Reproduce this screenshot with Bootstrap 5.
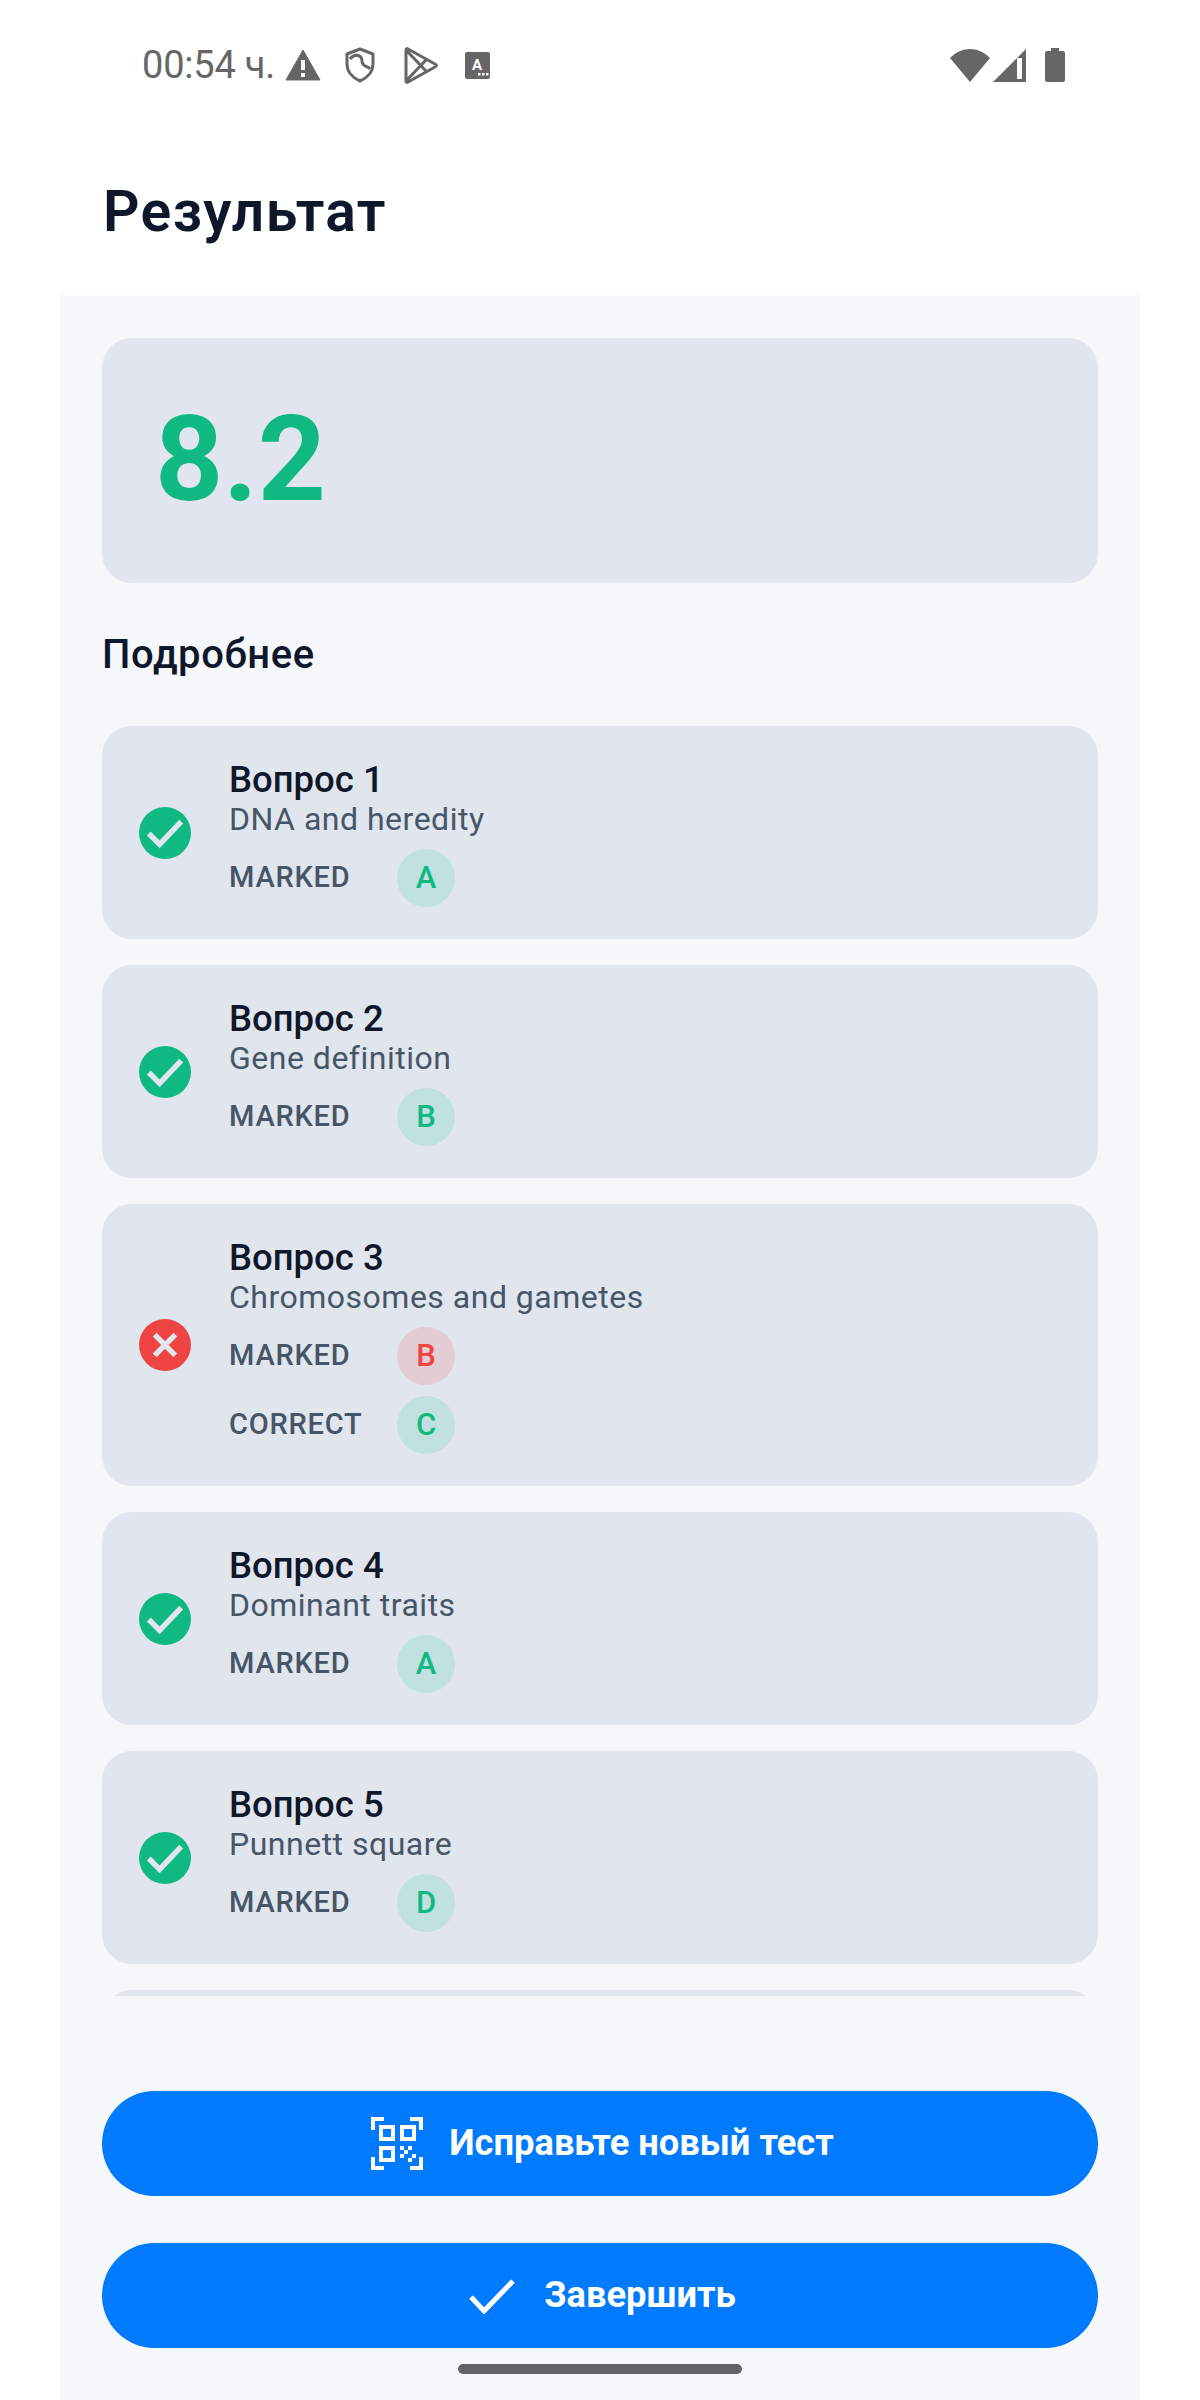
<!DOCTYPE html>
<html lang="ru">
<head>
    <meta charset="UTF-8">
    <meta name="viewport" content="width=device-width, initial-scale=1.0">
    <title>Результат</title>
    <link href="https://cdn.jsdelivr.net/npm/bootstrap@5.3.3/dist/css/bootstrap.min.css" rel="stylesheet">
    <style>
        body {
            background: #fff;
            font-family: Roboto, "Liberation Sans", sans-serif;
            height: 2400px;
            overflow: hidden;
        }
        .status-bar {
            height: 130px;
            padding: 0 135px 0 142px;
            color: #666;
            font-size: 38px;
            line-height: 1;
        }
        .status-bar svg { display: block; flex: none; }
        .status-time { margin-right: 10px; letter-spacing: -.2px; }
        .page-header {
            height: 165px;
            padding: 51px 0 0 103px;
            font-size: 57px;
            line-height: 62px;
            font-weight: 600;
            letter-spacing: 1.4px;
            color: #0f172a;
        }
        .result-panel {
            margin: 0 60px;
            height: 2105px;
            padding: 43px 42px 0;
            background: #f5f7fb;
        }
        .score-box {
            height: 245px;
            padding-left: 53px;
            background: #e0e5ee;
            border-radius: 30px;
            color: #10b981;
            font-size: 119px;
            font-weight: 700;
        }
        .details-title {
            margin: 47px 0 46px;
            font-size: 40px;
            line-height: 50px;
            font-weight: 500;
            letter-spacing: .6px;
            color: #0f172a;
        }
        .question-list { height: 1270px; overflow: hidden; }
        .question-item {
            padding: 34px 37px 32px;
            margin-bottom: 26px;
            background: #e0e5ee;
            border-radius: 30px;
        }
        .question-stub { height: 213px; }
        .state-icon { width: 52px; height: 52px; margin: 0 38px 2px 0; flex: none; }
        .question-name {
            font-size: 36.500px;
            line-height: 40px;
            font-weight: 500;
            color: #0f172a;
        }
        .question-topic {
            font-size: 32px;
            line-height: 39px;
            letter-spacing: .5px;
            color: #475569;
            margin-bottom: 10px;
        }
        .answer-row { height: 58px; margin-bottom: 11px; }
        .answer-row:last-child { margin-bottom: 0; }
        .answer-label {
            width: 168px;
            font-size: 29px;
            font-weight: 500;
            letter-spacing: .8px;
            color: #475569;
        }
        .answer-letter {
            width: 58px;
            height: 58px;
            font-size: 31px;
            font-weight: 500;
        }
        .letter-ok { background: #c1e0e0; color: #10b981; }
        .letter-bad { background: #e3ccd4; color: #ef4444; }
        .action-btn {
            height: 105px;
            padding-left: 17px;
            border: 0;
            background: #007aff;
            color: #fff;
            font-size: 36.300px;
            font-weight: 700;
        }
        .action-btn:hover { background: #007aff; color: #fff; }
        .first-action { margin-top: 95px; margin-bottom: 47px; }
        .home-bar {
            width: 284px;
            height: 10px;
            margin: 16px auto 0;
            background: #636467;
        }
    </style>
</head>
<body>
    <!-- Barre d'etat -->
    <div class="status-bar d-flex align-items-center">
        <span class="status-time">00:54 ч.</span>
        <svg width="36" height="32" viewBox="0 0 36 32" class="me-4"><path d="M18 1 35 31H1Z" fill="#666" stroke="#666" stroke-linejoin="round"/><rect x="16" y="11" width="4" height="10" fill="#fff"/><rect x="16" y="24" width="4" height="4" fill="#fff"/></svg>
        <svg width="30" height="36" viewBox="0 0 30 36"><path d="M15 2 28 7V17C28 25 22 31 15 34 8 31 2 25 2 17V7Z" fill="none" stroke="#666" stroke-width="3" stroke-linejoin="round"/><path d="M5 12C10 6 17 8 17 14 17 20 23 19 25 22" fill="none" stroke="#666" stroke-width="3"/></svg>
        <svg width="34" height="37" viewBox="0 0 34 37" style="margin-left:29px"><path d="M2 3C2 2 3 1 4 2L31 17C33 18 33 19 31 20L4 35C3 36 2 35 2 34Z M2 3 22 24 M2 34 22 13" fill="none" stroke="#666" stroke-width="3" stroke-linejoin="round"/></svg>
        <svg width="25" height="27" viewBox="0 0 25 27" style="margin-left:27px"><rect width="25" height="27" rx="2" fill="#666"/><text x="12" y="18" text-anchor="middle" font-family="Roboto" font-weight="700" font-size="15" fill="#fff">A</text><rect x="13" y="21" width="2.500" height="2.500" fill="#fff"/><rect x="17" y="21" width="2.500" height="2.500" fill="#fff"/><rect x="21" y="21" width="2.500" height="2.500" fill="#fff"/></svg>
        <svg width="40" height="33" viewBox="0 0 40 33" class="ms-auto"><path d="M20 33 0 9C12-3 28-3 40 9Z" fill="#666"/></svg>
        <svg width="33" height="33" viewBox="0 0 33 33" style="margin-left:3px"><path d="M33 0V33H0Z" fill="#666"/><rect x="24" y="9" width="5" height="21" fill="#fff"/></svg>
        <svg width="20" height="34" viewBox="0 0 20 34" style="margin-left:19px"><path d="M6 0H14V3H18C19 3 20 4 20 5V32C20 33 19 34 18 34H2C1 34 0 33 0 32V5C0 4 1 3 2 3H6Z" fill="#666"/></svg>
    </div>

    <div class="page-header">Результат</div>

    <div class="result-panel">
        <div class="score-box d-flex align-items-center">8.2</div>
        <div class="details-title">Подробнее</div>

        <!-- Les questions sont generees ici -->
        <div class="question-list" id="questionList"></div>

        <button class="btn action-btn first-action rounded-pill w-100 d-flex align-items-center justify-content-center">
            <svg width="52" height="53" viewBox="0 0 52 53" style="margin-right:26px" shape-rendering="crispEdges" fill="none" stroke="#fff" stroke-width="4.500">
                <path d="M13 2H2V13M39 2H50V13M2 40V51H13M50 40V51H39"/>
                <rect x="10" y="10" width="12" height="12"/><rect x="31" y="10" width="12" height="12"/><rect x="10" y="31" width="12" height="12"/>
                <path d="M29 29h4v4h-4zM37 29h4v4h-4zM33 33h4v4h-4zM29 37h4v4h-4zM41 37h4v4h-4zM37 41h4v4h-4z" fill="#fff" stroke="none"/>
            </svg>
            Исправьте новый тест
        </button>
        <button class="btn action-btn rounded-pill w-100 d-flex align-items-center justify-content-center">
            <svg width="46" height="36" viewBox="0 0 46 36" style="margin-right:29px"><path d="M2 19 15 33 44 3" fill="none" stroke="#fff" stroke-width="5"/></svg>
            Завершить
        </button>
        <div class="home-bar rounded-pill"></div>
    </div>

    <script src="https://cdn.jsdelivr.net/npm/bootstrap@5.3.3/dist/js/bootstrap.bundle.min.js"></script>
    <script>
        const questions = [
            { topic: 'DNA and heredity', marked: 'A' },
            { topic: 'Gene definition', marked: 'B' },
            { topic: 'Chromosomes and gametes', marked: 'B', correct: 'C' },
            { topic: 'Dominant traits', marked: 'A' },
            { topic: 'Punnett square', marked: 'D' }
        ];

        const okIcon = '<svg class="state-icon" viewBox="0 0 53 53"><circle cx="26.500" cy="26.500" r="26.500" fill="#10b981"/><path d="M10 27 21 38 43 15" fill="none" stroke="#e0e5ee" stroke-width="5.500"/></svg>';
        const badIcon = '<svg class="state-icon" viewBox="0 0 53 53"><circle cx="26.500" cy="26.500" r="26.500" fill="#ef4444"/><path d="M16 16 37 37M37 16 16 37" fill="none" stroke="#e0e5ee" stroke-width="5.500"/></svg>';

        function answerRow(label, letter, cls) {
            return `<div class="answer-row d-flex align-items-center">
                <span class="answer-label">${label}</span>
                <span class="answer-letter ${cls} rounded-circle d-flex align-items-center justify-content-center">${letter}</span>
            </div>`;
        }

        document.getElementById('questionList').innerHTML = questions.map((q, i) => `
            <div class="question-item d-flex align-items-center">
                ${q.correct ? badIcon : okIcon}
                <div>
                    <div class="question-name">Вопрос ${i + 1}</div>
                    <div class="question-topic">${q.topic}</div>
                    ${answerRow('MARKED', q.marked, q.correct ? 'letter-bad' : 'letter-ok')}
                    ${q.correct ? answerRow('CORRECT', q.correct, 'letter-ok') : ''}
                </div>
            </div>`).join('') + '<div class="question-item question-stub"></div>';
    </script>
</body>
</html>
